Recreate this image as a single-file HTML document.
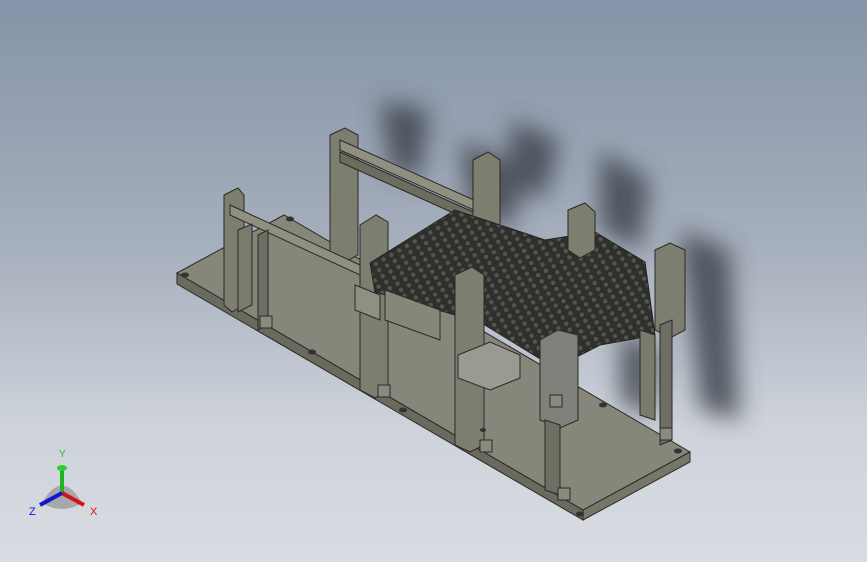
<!DOCTYPE html><html><head><style>
html,body{margin:0;padding:0}
body{width:867px;height:562px;overflow:hidden;background:linear-gradient(180deg,#8594a8 0%,#a7b0bd 45%,#cdd2da 75%,#d9dce2 100%);position:relative}
svg{position:absolute;left:0;top:0}
</style></head><body>
<svg width="867" height="562" viewBox="0 0 867 562">
<defs>
<filter id="b" x="-50%" y="-50%" width="200%" height="200%"><feGaussianBlur stdDeviation="12"/></filter>
<filter id="b2"><feGaussianBlur stdDeviation="0.6"/></filter>
<pattern id="g" width="9" height="7" patternUnits="userSpaceOnUse" patternTransform="rotate(-30)">
<rect width="9" height="7" fill="#2f2f2c"/><circle cx="4.5" cy="3.5" r="2.2" fill="#555550"/></pattern>
</defs>
<!-- shadows -->
<g filter="url(#b)" fill="#3a4048" opacity="0.8">
<path d="M380 100 L430 110 L420 180 L390 170Z"/>
<path d="M460 140 L530 170 L510 230 L470 210Z"/>
<path d="M510 120 L560 140 L545 200 L510 180Z"/>
<path d="M600 150 L650 180 L640 250 L600 230Z"/>
<path d="M680 230 L730 250 L740 420 L700 410Z"/>
<path d="M620 330 L660 350 L650 420 L620 400Z"/>
</g>
<!-- base plate -->
<polygon points="177,273 284,215 690,452 583,510" fill="#86867a" stroke="#2a2a25" stroke-width="1"/>
<polygon points="177,273 583,510 583,520 177,284" fill="#6a6a5f" stroke="#2a2a25" stroke-width="1"/>
<polygon points="583,510 690,452 690,462 583,520" fill="#777769" stroke="#2a2a25" stroke-width="1"/>
<!-- back frame -->
<polygon points="330,135 345,128 358,135 358,255 345,262 330,255" fill="#7d7d70" stroke="#2a2a25"/>
<polygon points="340,140 485,205 485,215 340,150" fill="#8f8f82" stroke="#2a2a25"/>
<polygon points="340,152 480,215 480,225 340,162" fill="#6c6c60" stroke="#2a2a25"/>
<polygon points="473,160 488,152 500,160 500,250 485,258 473,250" fill="#7d7d70" stroke="#2a2a25"/>
<!-- left frame -->
<polygon points="224,195 238,188 244,195 244,305 232,312 224,305" fill="#7d7d70" stroke="#2a2a25"/>
<polygon points="230,205 360,265 360,275 230,215" fill="#8f8f82" stroke="#2a2a25"/>
<polygon points="258,235 268,230 268,325 258,330" fill="#6e6e62" stroke="#2a2a25"/>
<polygon points="238,230 252,224 252,305 238,312" fill="#7a7a6d" stroke="#2a2a25"/>
<!-- mid column -->
<polygon points="360,225 376,215 388,222 388,390 375,398 360,390" fill="#7d7d70" stroke="#2a2a25"/>
<polygon points="355,285 380,295 380,320 355,310" fill="#8f8f82" stroke="#2a2a25"/>
<!-- grid -->
<polygon points="370,263 455,210 545,240 595,232 645,262 655,335 600,345 555,368 480,322 375,292" fill="url(#g)" stroke="#222" stroke-width="1"/>
<!-- right back columns -->
<polygon points="568,210 585,203 595,212 595,250 580,258 568,250" fill="#7d7d70" stroke="#2a2a25"/>
<polygon points="655,250 670,243 685,250 685,330 670,338 655,330" fill="#7d7d70" stroke="#2a2a25"/>
<polygon points="660,325 672,320 672,440 660,445" fill="#6e6e62" stroke="#2a2a25"/>
<polygon points="640,330 655,335 655,420 640,415" fill="#7a7a6d" stroke="#2a2a25"/>
<!-- front columns -->
<polygon points="455,275 472,267 484,275 484,445 470,452 455,445" fill="#7d7d70" stroke="#2a2a25"/>
<polygon points="540,340 558,330 578,335 578,420 560,428 540,420" fill="#80807a" stroke="#2a2a25"/>
<polygon points="545,420 560,425 560,495 545,490" fill="#6e6e62" stroke="#2a2a25"/>
<!-- cylinder -->
<polygon points="458,355 490,342 520,355 520,378 490,390 458,378" fill="#9a9a90" stroke="#2a2a25"/>
<polygon points="385,290 440,310 440,340 385,320" fill="#86867a" stroke="#2a2a25"/>
<!-- feet -->
<g fill="#8a8a7e" stroke="#2a2a25">
<rect x="260" y="316" width="12" height="12"/><rect x="378" y="385" width="12" height="12"/>
<rect x="480" y="440" width="12" height="12"/><rect x="558" y="488" width="12" height="12"/>
<rect x="660" y="428" width="12" height="12"/><rect x="550" y="395" width="12" height="12"/>
</g>
<!-- holes -->
<g fill="#333" >
<ellipse cx="185" cy="275" rx="4" ry="2.5"/><ellipse cx="290" cy="219" rx="4" ry="2.5"/>
<ellipse cx="403" cy="410" rx="4" ry="2.5"/><ellipse cx="312" cy="352" rx="4" ry="2.5"/>
<ellipse cx="580" cy="514" rx="4" ry="2.5"/><ellipse cx="678" cy="451" rx="4" ry="2.5"/>
<ellipse cx="603" cy="405" rx="4" ry="2.5"/><ellipse cx="483" cy="430" rx="3" ry="2"/>
</g>
<!-- triad -->
<g transform="translate(62,493)">
<path d="M-20 10 Q0 -25 20 10 Q0 22 -20 10Z" fill="#777" opacity="0.5"/>
<line x1="0" y1="0" x2="0" y2="-24" stroke="#1db41d" stroke-width="4"/>
<ellipse cx="0" cy="-25" rx="5" ry="3" fill="#2cd02c"/>
<line x1="0" y1="0" x2="22" y2="12" stroke="#d01515" stroke-width="4"/>
<line x1="0" y1="0" x2="-22" y2="12" stroke="#1515d0" stroke-width="4"/>
<text x="-3" y="-36" font-family="Liberation Sans,sans-serif" font-size="10" fill="#22c022">Y</text>
<text x="28" y="22" font-family="Liberation Sans,sans-serif" font-size="11" fill="#e01010">X</text>
<text x="-33" y="22" font-family="Liberation Sans,sans-serif" font-size="11" fill="#1010e0">Z</text>
</g>
</svg>
</body></html>
